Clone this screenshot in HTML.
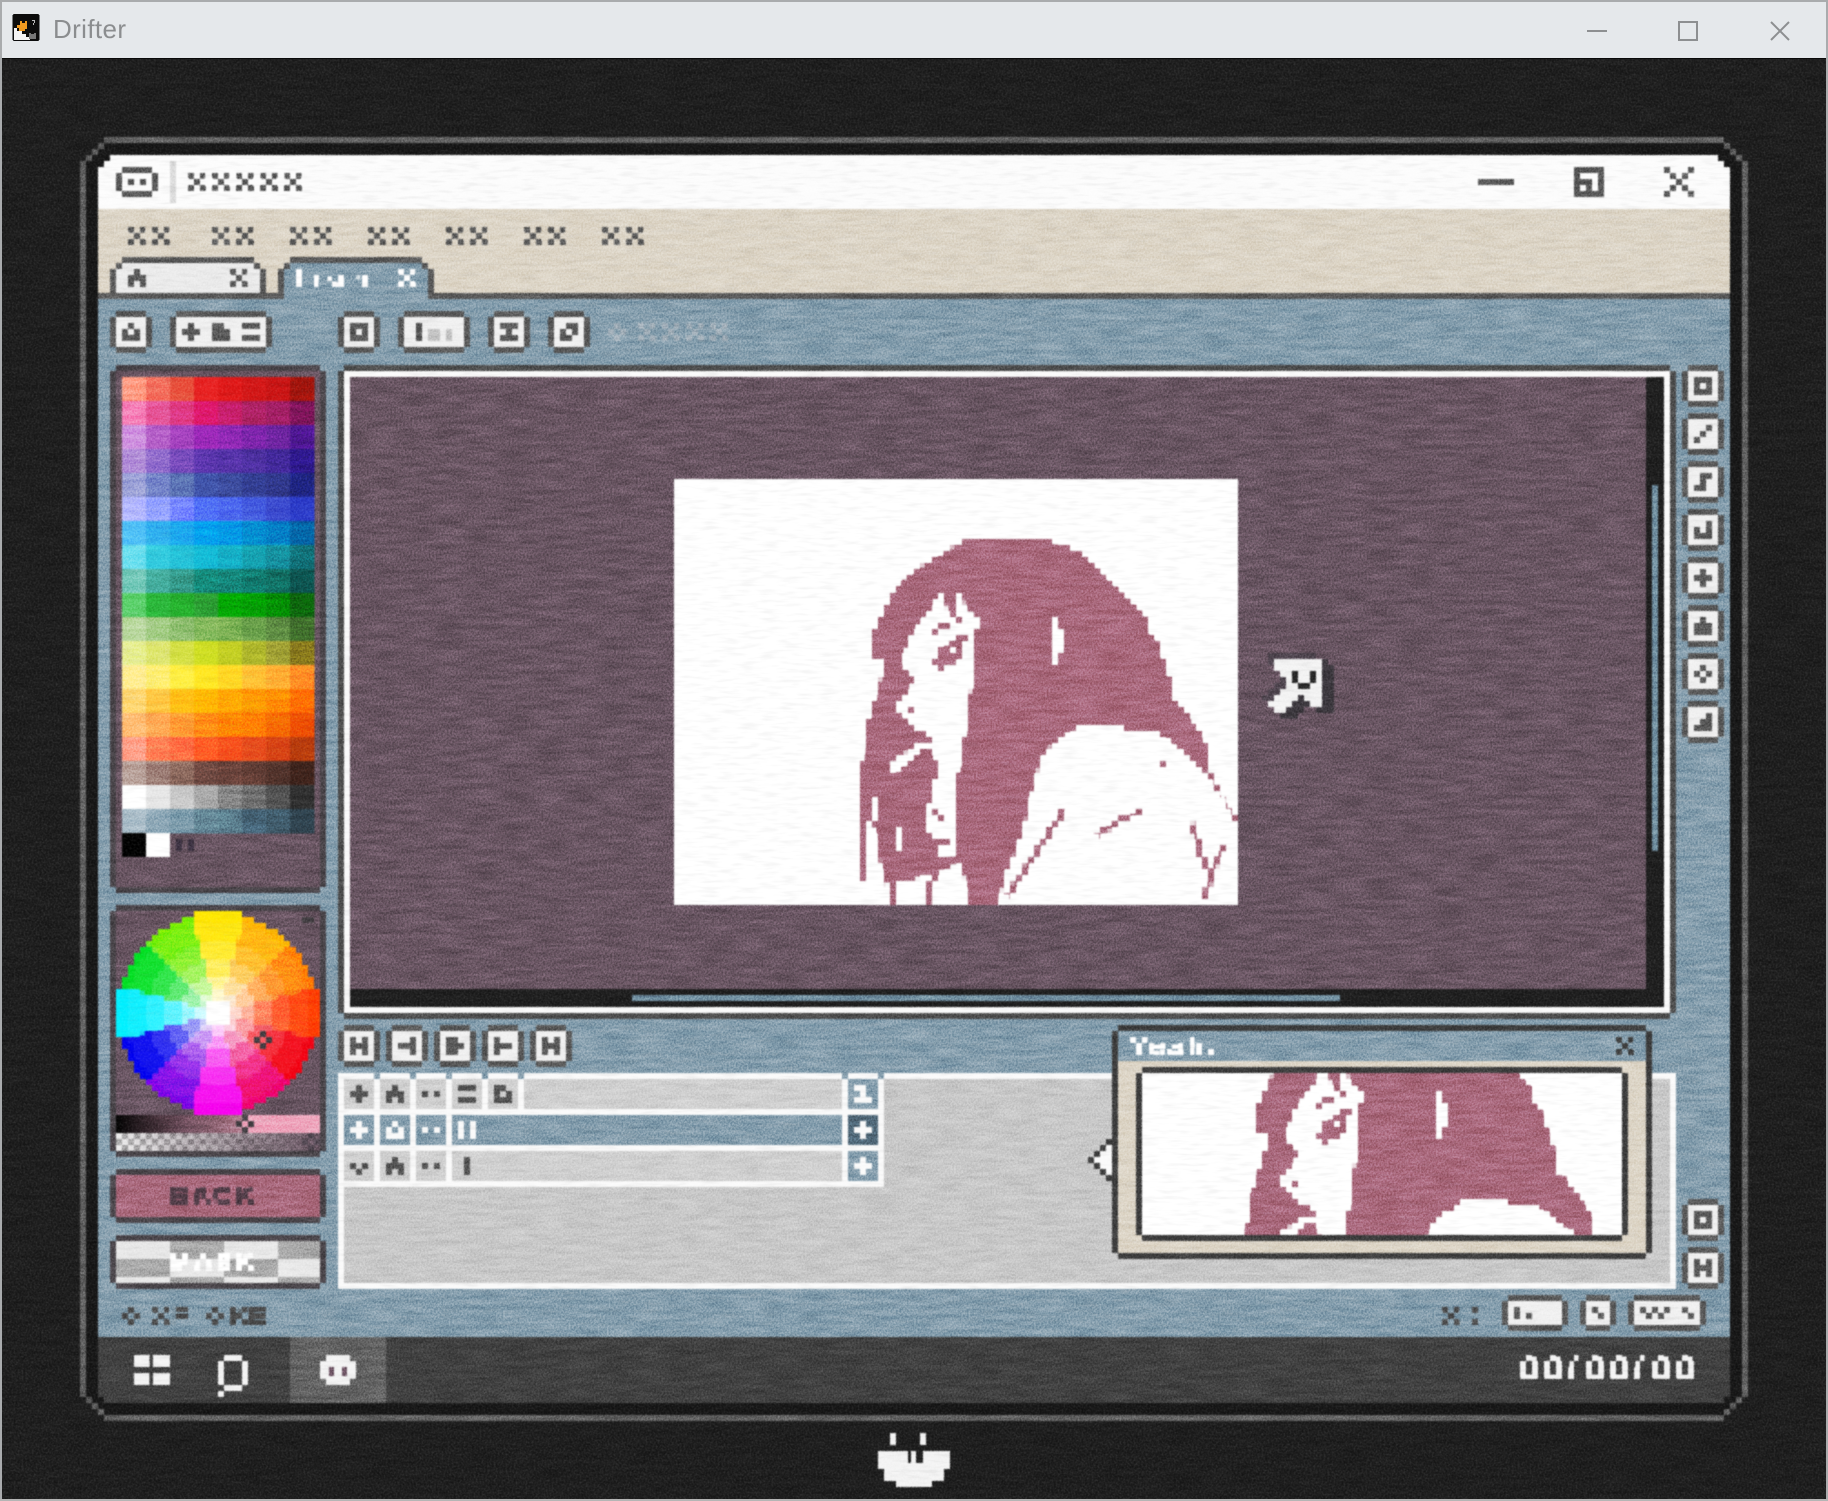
<!DOCTYPE html>
<html lang="en"><head><meta charset="utf-8"><title>Drifter</title>
<style>
html,body{margin:0;padding:0;background:#1a1a1a;width:1828px;height:1501px;overflow:hidden}
svg{display:block;position:absolute;left:0;top:0}
.t{font-family:"Liberation Sans",sans-serif;font-weight:bold;font-size:26px}
.p rect{width:4.05px;height:4.05px}
.p rect:nth-child(2){x:4px}.p rect:nth-child(3){x:8px}.p rect:nth-child(4){x:12px}.p rect:nth-child(5){x:16px}.p rect:nth-child(6){x:20px}.p rect:nth-child(7){x:24px}.p rect:nth-child(8){x:28px}
</style></head><body>
<svg width="1828" height="1501" viewBox="0 0 1828 1501" xmlns="http://www.w3.org/2000/svg">
<defs>
<filter id="mz" filterUnits="userSpaceOnUse" x="0" y="0" width="1828" height="1501" color-interpolation-filters="sRGB">
<feFlood x="4" y="7" width="2" height="2" flood-color="#000" result="s"/>
<feComposite in="s" in2="s" operator="over" x="2" y="5" width="6" height="6" result="c"/>
<feTile in="c" result="g"/>
<feComposite in="SourceGraphic" in2="g" operator="in"/>
<feComponentTransfer><feFuncA type="linear" slope="4" intercept="-1"/></feComponentTransfer>
<feMorphology operator="dilate" radius="2"/>
</filter>
<filter id="soft" filterUnits="userSpaceOnUse" x="0" y="0" width="1828" height="1501" color-interpolation-filters="sRGB"><feGaussianBlur stdDeviation=".75"/></filter>
<filter id="st" x="0" y="0" width="1" height="1" color-interpolation-filters="sRGB"><feTurbulence type="fractalNoise" baseFrequency=".03 .2" numOctaves="2" seed="4"/><feColorMatrix values="1.6 0 0 0 -.3 1.6 0 0 0 -.3 1.6 0 0 0 -.3 0 0 0 0 1"/></filter>
<filter id="gr" x="0" y="0" width="1" height="1" color-interpolation-filters="sRGB"><feTurbulence type="fractalNoise" baseFrequency=".55" numOctaves="2" seed="9"/><feColorMatrix values="2 0 0 0 -.5 2 0 0 0 -.5 2 0 0 0 -.5 0 0 0 0 1"/></filter>
<filter id="wg" x="0" y="0" width="1" height="1" color-interpolation-filters="sRGB"><feTurbulence type="fractalNoise" baseFrequency=".5" numOctaves="2" seed="3"/><feColorMatrix values="0 0 0 0 1 0 0 0 0 1 0 0 0 0 1 1.1 0 0 0 -.42"/></filter>
<filter id="sl" x="0" y="0" width="1" height="1" color-interpolation-filters="sRGB"><feTurbulence type="fractalNoise" baseFrequency=".05 .3" numOctaves="2" seed="12"/><feColorMatrix values="0 0 0 0 0 0 0 0 0 0 0 0 0 0 0 3 0 0 0 -1.4"/></filter>
<radialGradient id="wh" gradientUnits="userSpaceOnUse" cx="36" cy="168" r="18">
<stop offset="0" stop-color="#fff"/><stop offset=".13" stop-color="#fff"/><stop offset=".13" stop-color="#fff" stop-opacity=".8"/><stop offset=".2" stop-color="#fff" stop-opacity=".8"/><stop offset=".2" stop-color="#fff" stop-opacity=".6"/><stop offset=".35" stop-color="#fff" stop-opacity=".6"/><stop offset=".35" stop-color="#fff" stop-opacity=".36"/><stop offset=".5" stop-color="#fff" stop-opacity=".36"/><stop offset=".5" stop-color="#fff" stop-opacity=".18"/><stop offset=".65" stop-color="#fff" stop-opacity=".18"/><stop offset=".65" stop-color="#fff" stop-opacity=".06"/><stop offset=".85" stop-color="#fff" stop-opacity=".06"/><stop offset=".85" stop-color="#fff" stop-opacity="0"/><stop offset="1" stop-color="#fff" stop-opacity="0"/>
</radialGradient>
<linearGradient id="bar" gradientUnits="userSpaceOnUse" x1="19" x2="40" y1="0" y2="0"><stop offset="0" stop-color="#000"/><stop offset=".55" stop-color="#6a4a58"/><stop offset="1" stop-color="#b27c8e"/></linearGradient>
<linearGradient id="fade" gradientUnits="userSpaceOnUse" x1="19" x2="53" y1="0" y2="0"><stop offset="0" stop-color="#66525f" stop-opacity="0"/><stop offset="1" stop-color="#66525f"/></linearGradient>
<pattern id="chk" patternUnits="userSpaceOnUse" width="2" height="2"><rect width="2" height="2" fill="#eee"/><rect width="1" height="1" fill="#a8a8a8"/><rect x="1" y="1" width="1" height="1" fill="#a8a8a8"/></pattern>
<clipPath id="wc"><path d="M32 151H40V152H42V153H44V154H46V155H47V156H48V157H49V158H50V160H51V162H52V164H53V172H52V174H51V176H50V178H49V179H48V180H47V181H46V182H44V183H42V184H40V185H32V184H30V183H28V182H26V181H25V180H24V179H23V178H22V176H21V174H20V172H19V164H20V162H21V160H22V158H23V157H24V156H25V155H26V154H28V153H30V152H32Z"/></clipPath>
<clipPath id="pv"><rect x="1142" y="1073" width="480" height="162"/></clipPath>
<g id="b7"><path fill="#565656" d="M1 0h5v7h-5zM0 1h7v5h-7z"/><rect x="1" y="1" width="5" height="5" fill="#f1f1f1"/></g>
<path id="cur" d="M212 109H220V117H218V116H217V115H216V116H215V117H214V118H212V117H211V116H212V115H213V114H214V112H213V111H212Z"/>
<g id="art" transform="translate(660 470) scale(.3827 .3333)">
<polygon fill="#a8667a" points="805,207 1008,207 1055,225 1090,243 1115,262 1135,279 1150,297 1165,315 1180,333 1198,351 1213,369 1228,387 1245,405 1260,423 1275,441 1275,477 1290,495 1305,513 1305,549 1322,567 1322,603 1338,621 1338,693 1355,695 1368,715 1385,738 1400,765 1418,795 1430,825 1432,890 1448,925 1465,965 1480,985 1495,1025 1510,1045 1510,1052 1495,1052 1478,1000 1462,975 1445,945 1420,905 1400,880 1370,850 1345,830 1320,800 1290,785 1212,780 1212,762 1100,762 1070,790 1040,810 1008,840 990,890 975,950 960,1030 945,1090 930,1140 900,1220 885,1305 805,1305 790,1180 650,1235 585,1245 570,1135 555,1050 540,1050 540,1235 523,1235 523,925 540,765 555,715 570,645 585,600 585,567 553,567 553,495 570,459 585,423 600,387 615,351 645,315 695,279 745,243"/>
<g fill="#fff">
<polygon points="725,370 745,370 748,415 762,440 772,432 775,370 790,370 800,425 835,445 835,470 820,490 820,625 805,690 805,770 790,810 790,850 775,925 725,925 725,910 730,880 695,825 710,810 695,790 665,785 650,745 620,725 618,700 650,670 665,625 650,600 630,585 650,510 665,480 680,460 715,410"/>
<polygon points="602,880 680,818 695,825 615,908 602,908"/>
<polygon points="710,925 775,925 775,1150 735,1165 712,1105 695,1070 695,1020 712,990"/>
<rect x="553" y="985" width="17" height="65"/>
<rect x="615" y="1072" width="17" height="70"/>
<polygon points="1025,440 1040,440 1042,475 1055,480 1055,545 1040,550 1040,585 1025,585"/>
</g>
<g fill="#a8667a">
<polygon points="775,495 805,495 805,512 790,515 790,570 745,588 745,600 730,600 730,588 710,585 710,570 730,568 730,530 760,515"/>
<rect x="728" y="460" width="30" height="15"/><rect x="712" y="480" width="15" height="14"/><rect x="775" y="445" width="15" height="15"/>
<rect x="648" y="710" width="17" height="18"/>
<rect x="710" y="1018" width="15" height="15"/><rect x="727" y="1035" width="15" height="15"/><rect x="710" y="1106" width="48" height="18"/>
<rect x="602" y="1240" width="16" height="65"/><rect x="696" y="1250" width="16" height="55"/>
<rect x="1307" y="872" width="16" height="18"/>
</g>
<rect x="758" y="530" width="17" height="18" fill="#fff"/>
<g fill="none" stroke="#a8667a" stroke-width="17">
<polyline points="907,1280 985,1145 1060,1012"/><polyline points="1142,1100 1205,1045 1258,1026"/><polyline points="1392,1060 1410,1150 1440,1210 1425,1285"/><polyline points="1472,1130 1440,1210"/><polyline points="750,1170 716,1220 702,1260"/>
</g>
</g>
</defs>

<rect width="1828" height="1501" fill="#1a1a1a"/>

<g filter="url(#soft)">
<g transform="translate(2 5) scale(6)" shape-rendering="crispEdges" fill-rule="evenodd">
<path fill="#141414" d="M17 23h270v1h1v1h1v1h1v206h-1v1h-1v1h-1v1h-270v-1h-1v-1h-1v-1h-1v-206h1v-1h1v-1h1z"/>
<path fill="#5e5e5e" d="M17 22h270v1h-270zM16 23h1v1h-1zM15 24h1v1h-1zM14 25h1v1h-1zM13 26h1v206h-1zM287 23h1v1h-1zM288 24h1v1h-1zM289 25h1v1h-1zM290 26h1v206h-1zM14 232h1v1h-1zM15 233h1v1h-1zM16 234h1v1h-1zM17 235h270v1h-270zM287 234h1v1h-1zM288 233h1v1h-1zM289 232h1v1h-1z"/>

<rect x="16" y="25" width="272" height="9" fill="#fdfdfd"/>
<rect x="16" y="34" width="272" height="14" fill="#ddd5c6"/>
<rect x="16" y="48" width="272" height="1" fill="#565656"/>
<rect x="16" y="49" width="272" height="173" fill="#829cac"/>
<rect x="16" y="222" width="272" height="11" fill="#3d3d3d"/>
<rect x="48" y="222" width="16" height="11" fill="#5f5f5f"/>
<path fill="#141414" d="M16 25h2v1h-2zM16 26h1v1h-1zM286 25h2v1h-2zM287 26h1v1h-1zM16 232h1v1h-1zM287 232h1v1h-1z"/>

<!-- title bar -->
<path fill="#565656" d="M20 27h5v1h-5zM19 28h1v3h-1zM25 28h1v3h-1zM20 31h5v1h-5zM21 29h1v1h-1zM23 29h1v1h-1z"/>
<rect x="28" y="26" width="1" height="7" fill="#dcdcdc"/>
<rect x="246" y="29" width="6" height="1" fill="#565656"/>
<rect x="262" y="27" width="5" height="5" fill="#565656"/>
<path fill="#fdfdfd" d="M263 28h3v1h-3zM265 29h1v2h-1zM263 30h1v1h-1z"/>
<path fill="#565656" d="M277 27h1v1h-1zM281 27h1v1h-1zM278 28h1v1h-1zM280 28h1v1h-1zM279 29h1v1h-1zM278 30h1v1h-1zM280 30h1v1h-1zM277 31h1v1h-1zM281 31h1v1h-1z"/>

<!-- tabs -->
<path fill="#565656" d="M20 42h22v1h-22zM19 43h1v1h-1zM42 43h1v1h-1zM18 44h1v4h-1zM43 44h1v4h-1z"/>
<path fill="#ececec" d="M20 43h22v1h1v4h-24v-4h1z"/>
<path fill="#565656" d="M22 44h1v1h-1zM21 45h3v2h-3zM22 46v1h1v-1z"/>
<path fill="#565656" d="M48 42h22v1h-22zM47 43h1v1h-1zM70 43h1v1h-1zM46 44h1v5h-1zM71 44h1v5h-1z"/>
<path fill="#829cac" d="M48 43h22v1h1v5h-24v-5h1z"/>

<!-- toolbar buttons -->
<use href="#b7" x="18" y="51"/>
<path fill="#565656" d="M29 51h15v7h-15zM28 52h17v5h-17z"/><rect x="29" y="52" width="15" height="5" fill="#f1f1f1"/>
<use href="#b7" x="56" y="51"/>
<path fill="#565656" d="M67 51h10v7h-10zM66 52h12v5h-12z"/><rect x="67" y="52" width="10" height="5" fill="#f1f1f1"/>
<use href="#b7" x="81" y="51"/>
<use href="#b7" x="91" y="51"/>
<path fill="#565656" d="M21 53h1v1h-1zM20 54h1v1h-1zM22 54h1v1h-1zM20 55h3v1h-3z
M31 53h1v3h-1zM30 54h1v1h-1zM32 54h1v1h-1zM35 53h2v1h-2zM35 54h3v2h-3zM40 53h3v1h-3zM40 55h3v1h-3z
M58 53h3v3h-3zM59 54v1h1v-1zM69 53h1v3h-1zM83 53h3v1h-3zM84 54h1v1h-1zM83 55h3v1h-3z
M94 53h2v1h-2zM93 54h1v2h-1zM95 54h1v1h-1zM94 55h1v1h-1z"/>
<path fill="#c4c4c4" d="M71 54h2v2h-2zM74 54h1v2h-1z"/>
<path fill="#a0aeb8" d="M102 53h1v1h-1zM101 54h1v1h-1zM103 54h1v1h-1zM102 55h1v1h-1z"/>

<!-- palette panel -->
<path fill="#474247" d="M19 60h34v88h-34zM18 61h36v86h-36z"/>
<rect x="19" y="61" width="34" height="86" fill="#66525f"/>
<g transform="translate(20 0)">
<g class="p" transform="translate(0 62)"><rect fill="#ff9a80"/><rect fill="#f56c5a"/><rect fill="#ea4f3a"/><rect fill="#e81e1e"/><rect fill="#e01515"/><rect fill="#d41414"/><rect fill="#c81010"/><rect fill="#a01008"/></g>
<g class="p" transform="translate(0 66)"><rect fill="#f77fb8"/><rect fill="#e8549a"/><rect fill="#e0347f"/><rect fill="#e0146a"/><rect fill="#c81a68"/><rect fill="#b01e64"/><rect fill="#a01a60"/><rect fill="#7e1058"/></g>
<g class="p" transform="translate(0 70)"><rect fill="#cf8ee0"/><rect fill="#b45cc8"/><rect fill="#a640c0"/><rect fill="#9a24b8"/><rect fill="#8e24b4"/><rect fill="#7a20aa"/><rect fill="#6c20a0"/><rect fill="#4a1290"/></g>
<g class="p" transform="translate(0 74)"><rect fill="#b08ad8"/><rect fill="#8e68cc"/><rect fill="#7648bc"/><rect fill="#5c34b0"/><rect fill="#5430aa"/><rect fill="#4a2ca0"/><rect fill="#3e2498"/><rect fill="#2a148c"/></g>
<g class="p" transform="translate(0 78)"><rect fill="#9aa0d8"/><rect fill="#7080c8"/><rect fill="#5870b4"/><rect fill="#3c50a8"/><rect fill="#38489c"/><rect fill="#303c94"/><rect fill="#2c348a"/><rect fill="#1a2080"/></g>
<g class="p" transform="translate(0 82)"><rect fill="#b4b8ff"/><rect fill="#96a4ff"/><rect fill="#7080ff"/><rect fill="#4c6cf8"/><rect fill="#4864f0"/><rect fill="#4058e0"/><rect fill="#3848d0"/><rect fill="#2838c8"/></g>
<g class="p" transform="translate(0 86)"><rect fill="#4cc0f8"/><rect fill="#2cb0f0"/><rect fill="#18a8f0"/><rect fill="#00a0f0"/><rect fill="#0098e8"/><rect fill="#0088d0"/><rect fill="#0080c8"/><rect fill="#0064a8"/></g>
<g class="p" transform="translate(0 90)"><rect fill="#68e0f0"/><rect fill="#30cce0"/><rect fill="#20c0d8"/><rect fill="#10bcd8"/><rect fill="#10b0c8"/><rect fill="#10a0b0"/><rect fill="#108c9c"/><rect fill="#0c7078"/></g>
<g class="p" transform="translate(0 94)"><rect fill="#70c8b8"/><rect fill="#40ac9c"/><rect fill="#309888"/><rect fill="#108878"/><rect fill="#108478"/><rect fill="#0c786c"/><rect fill="#0c6c60"/><rect fill="#08504c"/></g>
<g class="p" transform="translate(0 98)"><rect fill="#58d068"/><rect fill="#28b838"/><rect fill="#20ac28"/><rect fill="#28a030"/><rect fill="#00a800"/><rect fill="#00a000"/><rect fill="#008c00"/><rect fill="#086408"/></g>
<g class="p" transform="translate(0 102)"><rect fill="#b8d89c"/><rect fill="#a0cc80"/><rect fill="#90c070"/><rect fill="#80b858"/><rect fill="#78b050"/><rect fill="#68a048"/><rect fill="#5c8c40"/><rect fill="#3c6c28"/></g>
<g class="p" transform="translate(0 106)"><rect fill="#e8f090"/><rect fill="#e0e870"/><rect fill="#d4e040"/><rect fill="#d0e020"/><rect fill="#c4d020"/><rect fill="#b0b828"/><rect fill="#a0a030"/><rect fill="#887818"/></g>
<g class="p" transform="translate(0 110)"><rect fill="#ffee90"/><rect fill="#fff070"/><rect fill="#fff040"/><rect fill="#ffe820"/><rect fill="#ffd820"/><rect fill="#ffc030"/><rect fill="#ffb030"/><rect fill="#ff8c20"/></g>
<g class="p" transform="translate(0 114)"><rect fill="#ffd870"/><rect fill="#ffc840"/><rect fill="#ffbc10"/><rect fill="#ffb800"/><rect fill="#ffa800"/><rect fill="#ff9800"/><rect fill="#ff8c00"/><rect fill="#ff6c00"/></g>
<g class="p" transform="translate(0 118)"><rect fill="#ffbc70"/><rect fill="#ffa850"/><rect fill="#ff9c30"/><rect fill="#ff8c10"/><rect fill="#ff8400"/><rect fill="#ff7800"/><rect fill="#f86800"/><rect fill="#f04c00"/></g>
<g class="p" transform="translate(0 122)"><rect fill="#ffa088"/><rect fill="#ff7c50"/><rect fill="#ff6c40"/><rect fill="#ff5820"/><rect fill="#f84c18"/><rect fill="#e84818"/><rect fill="#d84010"/><rect fill="#b83808"/></g>
<g class="p" transform="translate(0 126)"><rect fill="#b8a098"/><rect fill="#9c7c74"/><rect fill="#8c685c"/><rect fill="#704840"/><rect fill="#684038"/><rect fill="#5c3830"/><rect fill="#503028"/><rect fill="#3c2018"/></g>
<g class="p" transform="translate(0 130)"><rect fill="#ffffff"/><rect fill="#e8e8e8"/><rect fill="#c8c8c8"/><rect fill="#a8a8a8"/><rect fill="#848484"/><rect fill="#6c6c6c"/><rect fill="#505050"/><rect fill="#2c2c2c"/></g>
<g class="p" transform="translate(0 134)"><rect fill="#a8bcc8"/><rect fill="#88a4b4"/><rect fill="#7c9cac"/><rect fill="#608494"/><rect fill="#587c8c"/><rect fill="#446478"/><rect fill="#3c5868"/><rect fill="#2c404c"/></g>
</g>
<rect x="20" y="138" width="4" height="4" fill="#000"/><rect x="24" y="138" width="4" height="4" fill="#fff"/>
<path fill="#3a3040" d="M29 139h1v2h-1zM31 139h1v2h-1z"/>

<!-- colour panel -->
<path fill="#474247" d="M19 150h34v42h-34zM18 151h36v40h-36z"/>
<rect x="19" y="151" width="34" height="40" fill="#66525f"/>
</g>

<!-- wheel (sampled to the 6px cell grid) -->
<g filter="url(#mz)"><g transform="translate(2 5) scale(6)"><g clip-path="url(#wc)">
<path fill="#ffe800" d="M36 168L28.2 139H43.8z"/>
<path fill="#ffb400" d="M36 168L43.8 139L57.2 146.8z"/>
<path fill="#ff8000" d="M36 168L57.2 146.8L65 160.2z"/>
<path fill="#ff3c00" d="M36 168L65 160.2V175.8z"/>
<path fill="#f40010" d="M36 168L65 175.8L57.2 189.2z"/>
<path fill="#f0006c" d="M36 168L57.2 189.2L43.8 197z"/>
<path fill="#f800f0" d="M36 168L43.8 197H28.2z"/>
<path fill="#7c00e8" d="M36 168L28.2 197L14.8 189.2z"/>
<path fill="#0000f0" d="M36 168L14.8 189.2L7 175.8z"/>
<path fill="#00f0ff" d="M36 168L7 175.8V160.2z"/>
<path fill="#00e020" d="M36 168L7 160.2L14.8 146.8z"/>
<path fill="#70f000" d="M36 168L14.8 146.8L28.2 139z"/>
<circle cx="36" cy="168" r="18" fill="url(#wh)"/>
</g></g></g>

<g transform="translate(2 5) scale(6)" shape-rendering="crispEdges" fill-rule="evenodd">
<path fill="#3e3a3e" d="M50 152h2v1h-2zM43 171h1v1h-1zM42 172h1v1h-1zM44 172h1v1h-1zM43 173h1v1h-1z"/>
<rect x="19" y="185" width="21" height="3" fill="url(#bar)"/>
<rect x="40" y="185" width="13" height="3" fill="#efa3bb"/>
<path fill="#3e3a3e" d="M40 185h1v1h-1zM39 186h1v1h-1zM41 186h1v1h-1zM40 187h1v1h-1z"/>
<rect x="19" y="188" width="34" height="3" fill="url(#chk)"/>
<rect x="19" y="188" width="34" height="3" fill="url(#fade)"/>
<path fill="#4a404a" d="M51 188h1v1h-1zM50 189h1v1h-1zM52 189h1v1h-1zM51 190h1v1h-1z"/>

<!-- back / mask buttons -->
<path fill="#474247" d="M19 194h34v9h-34zM18 195h36v7h-36z"/>
<rect x="19" y="195" width="34" height="7" fill="#a8667a"/>
<path fill="#474247" d="M19 205h34v9h-34zM18 206h36v7h-36z"/>
<rect x="19" y="206" width="34" height="7" fill="#e9e9e9"/>
<path fill="#a8a8a8" d="M28 206h9v3h-9zM46 206h7v3h-7zM19 209h9v3h-9zM37 209h9v3h-9zM28 212h9v1h-9zM46 212h7v1h-7z"/>

<!-- status left -->
<path fill="#484848" d="M21 217h1v1h-1zM20 218h1v1h-1zM22 218h1v1h-1zM21 219h1v1h-1zM35 217h1v1h-1zM34 218h1v1h-1zM36 218h1v1h-1zM35 219h1v1h-1z"/>

<!-- canvas -->
<path fill="#4a4a4a" d="M57 60h221v1h-221zM56 61h1v107h-1zM278 61h1v107h-1zM57 168h221v1h-221z"/>
<rect x="57" y="61" width="221" height="107" fill="#fbfbfb"/>
<rect x="58" y="62" width="216" height="102" fill="#66525f"/>
<rect x="274" y="62" width="3" height="105" fill="#1b1b1b"/>
<rect x="58" y="164" width="219" height="3" fill="#1b1b1b"/>
<rect x="275" y="80" width="1" height="61" fill="#6f8ea0"/>
<rect x="105" y="165" width="118" height="1" fill="#6f8ea0"/>
</g>

<!-- picture -->
<g filter="url(#mz)"><rect x="674" y="479" width="564" height="426" fill="#fff"/><use href="#art"/></g>

<g transform="translate(2 5) scale(6)" shape-rendering="crispEdges" fill-rule="evenodd">
<!-- cursor -->
<use href="#cur" transform="translate(-1 -1)" fill="#4c424c"/>
<use href="#cur" transform="translate(2 1)" fill="#38343a"/>
<use href="#cur" transform="translate(1 1)" fill="#38343a"/>
<use href="#cur" transform="translate(1 0)" fill="#38343a"/>
<use href="#cur" fill="#f4f4f4"/>
<path fill="#222" d="M215 111h1v2h-1zM218 111h1v2h-1zM216 113h2v1h-2z"/>

<!-- right column -->
<use href="#b7" x="280" y="60"/><use href="#b7" x="280" y="68"/><use href="#b7" x="280" y="76"/><use href="#b7" x="280" y="84"/><use href="#b7" x="280" y="92"/><use href="#b7" x="280" y="100"/><use href="#b7" x="280" y="108"/><use href="#b7" x="280" y="116"/>
<path fill="#565656" d="M282 62h3v3h-3zM283 63v1h1v-1z
M284 70h1v1h-1zM283 71h1v1h-1zM282 72h1v1h-1z
M283 78h2v1h-2zM283 79h1v1h-1zM282 80h2v1h-2z
M284 86h1v3h-1zM282 87h1v1h-1zM282 88h2v1h-2z
M283 94h1v3h-1zM282 95h1v1h-1zM284 95h1v1h-1z
M283 102h1v1h-1zM282 103h3v2h-3z
M283 110h1v1h-1zM282 111h1v1h-1zM284 111h1v1h-1zM283 112h1v1h-1z
M284 118h1v1h-1zM283 119h2v1h-2zM282 120h3v1h-3z"/>

<!-- transport -->
<use href="#b7" x="56" y="170"/><use href="#b7" x="64" y="170"/><use href="#b7" x="72" y="170"/><use href="#b7" x="80" y="170"/><use href="#b7" x="88" y="170"/>
<path fill="#565656" d="M58 172h1v3h-1zM60 172h1v3h-1zM59 173h1v1h-1z
M68 172h1v3h-1zM66 173h2v1h-2z
M74 172h2v3h-2zM76 173h1v1h-1z
M82 172h1v3h-1zM83 173h2v1h-2z
M90 172h1v3h-1zM92 172h1v3h-1zM91 173h1v1h-1z"/>

<!-- timeline -->
<rect x="56" y="178" width="223" height="36" fill="#fbfbfb"/>
<rect x="57" y="179" width="221" height="34" fill="#c8c8c8"/>
<rect x="57" y="179" width="90" height="18" fill="#fbfbfb"/>
<path fill="#829cac" d="M62 178h1v1h-1zM68 178h1v1h-1zM74 178h1v1h-1zM80 178h1v1h-1zM86 178h1v1h-1zM140 178h1v1h-1zM146 178h1v1h-1z"/>
<path fill="#d0d0d0" d="M57 179h5v5h-5zM63 179h5v5h-5zM69 179h5v5h-5zM75 179h5v5h-5zM81 179h5v5h-5zM87 179h53v5h-53z
M57 191h5v5h-5zM63 191h5v5h-5zM69 191h5v5h-5zM75 191h65v5h-65z"/>
<path fill="#829cac" d="M57 185h5v5h-5zM63 185h5v5h-5zM69 185h5v5h-5zM75 185h65v5h-65zM141 179h5v5h-5zM141 191h5v5h-5z"/>
<rect x="141" y="185" width="5" height="5" fill="#4e6778"/>
<path fill="#505050" d="M59 180h1v3h-1zM58 181h1v1h-1zM60 181h1v1h-1zM65 180h1v1h-1zM64 181h3v2h-3zM65 182v1h1v-1zM70 181h1v1h-1zM72 181h1v1h-1zM76 180h3v1h-3zM76 182h3v1h-3zM82 180h2v1h-2zM82 181h3v2h-3zM83 181v1h1v-1z
M58 193h1v1h-1zM60 193h1v1h-1zM59 194h1v1h-1zM65 192h1v1h-1zM64 193h3v2h-3zM65 194v1h1v-1zM70 193h1v1h-1zM72 193h1v1h-1zM77 192h1v3h-1z"/>
<path fill="#fbfbfb" d="M59 186h1v3h-1zM58 187h1v1h-1zM60 187h1v1h-1zM65 186h1v1h-1zM64 187h1v1h-1zM66 187h1v1h-1zM64 188h3v1h-3zM70 187h1v1h-1zM72 187h1v1h-1zM76 186h1v3h-1zM78 186h1v3h-1z
M143 186h1v3h-1zM142 187h1v1h-1zM144 187h1v1h-1zM143 192h1v3h-1zM142 193h1v1h-1zM144 193h1v1h-1z
M142 180h2v1h-2zM143 181h1v1h-1zM142 182h3v1h-3z"/>

<use href="#b7" x="280" y="199"/><use href="#b7" x="280" y="207"/>
<path fill="#565656" d="M282 201h3v3h-3zM283 202v1h1v-1zM282 209h1v3h-1zM284 209h1v3h-1zM283 210h1v1h-1z"/>

<!-- preview window -->
<path fill="#3a3a3a" d="M184 189h1v1h-1zM183 190h1v1h-1zM182 191h1v1h-1zM181 192h1v1h-1zM182 193h1v1h-1zM183 194h1v1h-1zM184 195h1v1h-1z"/>
<path fill="#fbfbfb" d="M184 190h1v5h-1zM183 191h1v3h-1zM182 192h1v1h-1z"/>
<path fill="#3a3a3a" d="M186 170h88v39h-88zM185 171h90v37h-90z"/>
<rect x="186" y="171" width="88" height="5" fill="#829cac"/>
<rect x="186" y="176" width="88" height="32" fill="#ddd5c6"/>
<path fill="#3a3a3a" d="M190 177h80v29h-80zM189 178h82v27h-82z"/>
<rect x="190" y="178" width="80" height="27" fill="#fff"/>
</g>
<g filter="url(#mz)"><g clip-path="url(#pv)"><use href="#art" transform="translate(384 474)"/></g></g>

<g transform="translate(2 5) scale(6)" shape-rendering="crispEdges" fill-rule="evenodd">
<!-- status right -->
<path fill="#484848" d="M245 217h1v1h-1zM245 219h1v1h-1z"/>
<path fill="#565656" d="M251 215h9v6h-9zM250 216h11v4h-11z"/><rect x="251" y="216" width="9" height="4" fill="#f1f1f1"/>
<path fill="#565656" d="M264 215h4v6h-4zM263 216h6v4h-6z"/><rect x="264" y="216" width="4" height="4" fill="#f1f1f1"/>
<path fill="#565656" d="M272 215h11v6h-11zM271 216h13v4h-13z"/><rect x="272" y="216" width="11" height="4" fill="#f1f1f1"/>
<path fill="#565656" d="M252 217h1v2h-1zM254 218h1v1h-1z"/>
<path fill="#565656" d="M265 217h1v1h-1zM266 218h1v1h-1z"/>
<path fill="#565656" d="M273 217h1v1h-1zM274 218h1v1h-1zM275 217h1v1h-1zM276 218h1v1h-1zM277 217h1v1h-1zM280 217h1v1h-1zM281 218h1v1h-1z"/>

<!-- dark bar icons -->
<path fill="#f4f4f4" d="M22 225h2.6v2h-2.6zM25.2 225h2.8v2h-2.8zM22 228h2.6v2h-2.6zM25.2 228h2.8v2h-2.8z
M37 225h3v1h-3zM36 226h1v4h-1zM40 226h1v4h-1zM37 230h3v1h-3zM36 231h1v1h-1z
M54 225h4v1h-4zM53 226h6v3h-6zM54 229h4v1h-4z"/>
<path fill="#6a5060" d="M54.5 227h.8v1.5h-.8zM56.7 227h.8v1.5h-.8z"/>

<!-- mascot -->
<path fill="#f4f4f4" d="M148 238h1v2h-1zM153 238h1v2h-1z
M146 241h5v2h-5zM151.5 241h.8v2h-.8zM153.5 241h4.5v2h-4.5zM146 243h12v1h-12zM147 244h10v2h-10zM149 246h6v1h-6z"/>
</g>

<!-- pixel labels: real text sampled onto the 6px grid -->
<g filter="url(#mz)" class="t">
<text x="188" y="191" fill="#565656" letter-spacing="6.7">XXXXX</text>
<g fill="#565656" letter-spacing="6.7">
<text x="128" y="245">XX</text><text x="212" y="245">XX</text><text x="290" y="245">XX</text><text x="368" y="245">XX</text><text x="446" y="245">XX</text><text x="524" y="245">XX</text><text x="602" y="245">XX</text>
</g>
<text x="230" y="287" fill="#565656">X</text>
<text x="296" y="287" fill="#fff" textLength="72" font-size="26">Iron</text>
<text x="398" y="287" fill="#fff">X</text>
<text x="638" y="341" fill="#a0aeb8" letter-spacing="6.7">XXXX</text>
<text x="170" y="1205" fill="#4f3a45" textLength="84">BACK</text>
<text x="170" y="1271" fill="#fff" textLength="84">MASK</text>
<text x="152" y="1325" fill="#484848" textLength="36">XF</text>
<text x="230" y="1325" fill="#484848" textLength="36">KE</text>
<text x="1442" y="1325" fill="#484848">X</text>
<text x="1130" y="1055" fill="#fff" textLength="84">Yeah.</text>
<text x="1616" y="1055" fill="#3a3a3a">X</text>
<text x="1520 1544 1568 1586 1610 1634 1652 1676" y="1380" fill="#f4f4f4" font-size="33">00/00/00</text>
</g>
</g>

<!-- CRT texture -->
<rect x="2" y="59" width="1824" height="1440" filter="url(#st)" opacity=".15" style="mix-blend-mode:overlay"/>
<rect x="2" y="59" width="1824" height="1440" filter="url(#gr)" opacity=".2" style="mix-blend-mode:overlay"/>
<rect x="2" y="59" width="1824" height="1440" filter="url(#wg)" opacity=".16"/>
<rect x="2" y="59" width="1824" height="1440" filter="url(#sl)" opacity=".035"/>

<!-- OS chrome -->
<rect x="0" y="0" width="1828" height="58" fill="#e5e8eb"/>
<rect x="0" y="0" width="1828" height="2" fill="#a9abad"/>
<rect x="0" y="58" width="1828" height="1" fill="#0a0a0a"/>
<rect x="0" y="0" width="2" height="1501" fill="#a9abad"/>
<rect x="1826" y="0" width="2" height="1501" fill="#a9abad"/>
<rect x="0" y="1499" width="1828" height="2" fill="#b5b5b5"/>
<g shape-rendering="crispEdges">
<rect x="12.5" y="14" width="27" height="27" rx="2" fill="#0c0c0c"/>
<path fill="#f4f4f4" d="M14 28h3v3h5v3h4v3h4v3h-16z"/>
<path fill="#f09a20" d="M20 21h2v2h3v-2h2v8h-2v2h-6v-3h-2v-3h3z"/>
<path fill="#777" d="M29 33h2v1h3v-1h2v6h-7z"/>
<path fill="#bbb" d="M32 20h3v1h-3zM34 21h1v2h-1zM33 23h1v2h-1z"/>
</g>
<text x="53" y="38" font-family="'Liberation Sans',sans-serif" font-size="26" fill="#8b8d8f" textLength="73">Drifter</text>
<rect x="1587" y="30" width="20" height="2" fill="#8d8f91"/>
<rect x="1679" y="22" width="18" height="18" fill="none" stroke="#8d8f91" stroke-width="2"/>
<path d="M1771 22L1789 40M1789 22L1771 40" stroke="#8d8f91" stroke-width="2" fill="none"/>
</svg>
</body></html>
